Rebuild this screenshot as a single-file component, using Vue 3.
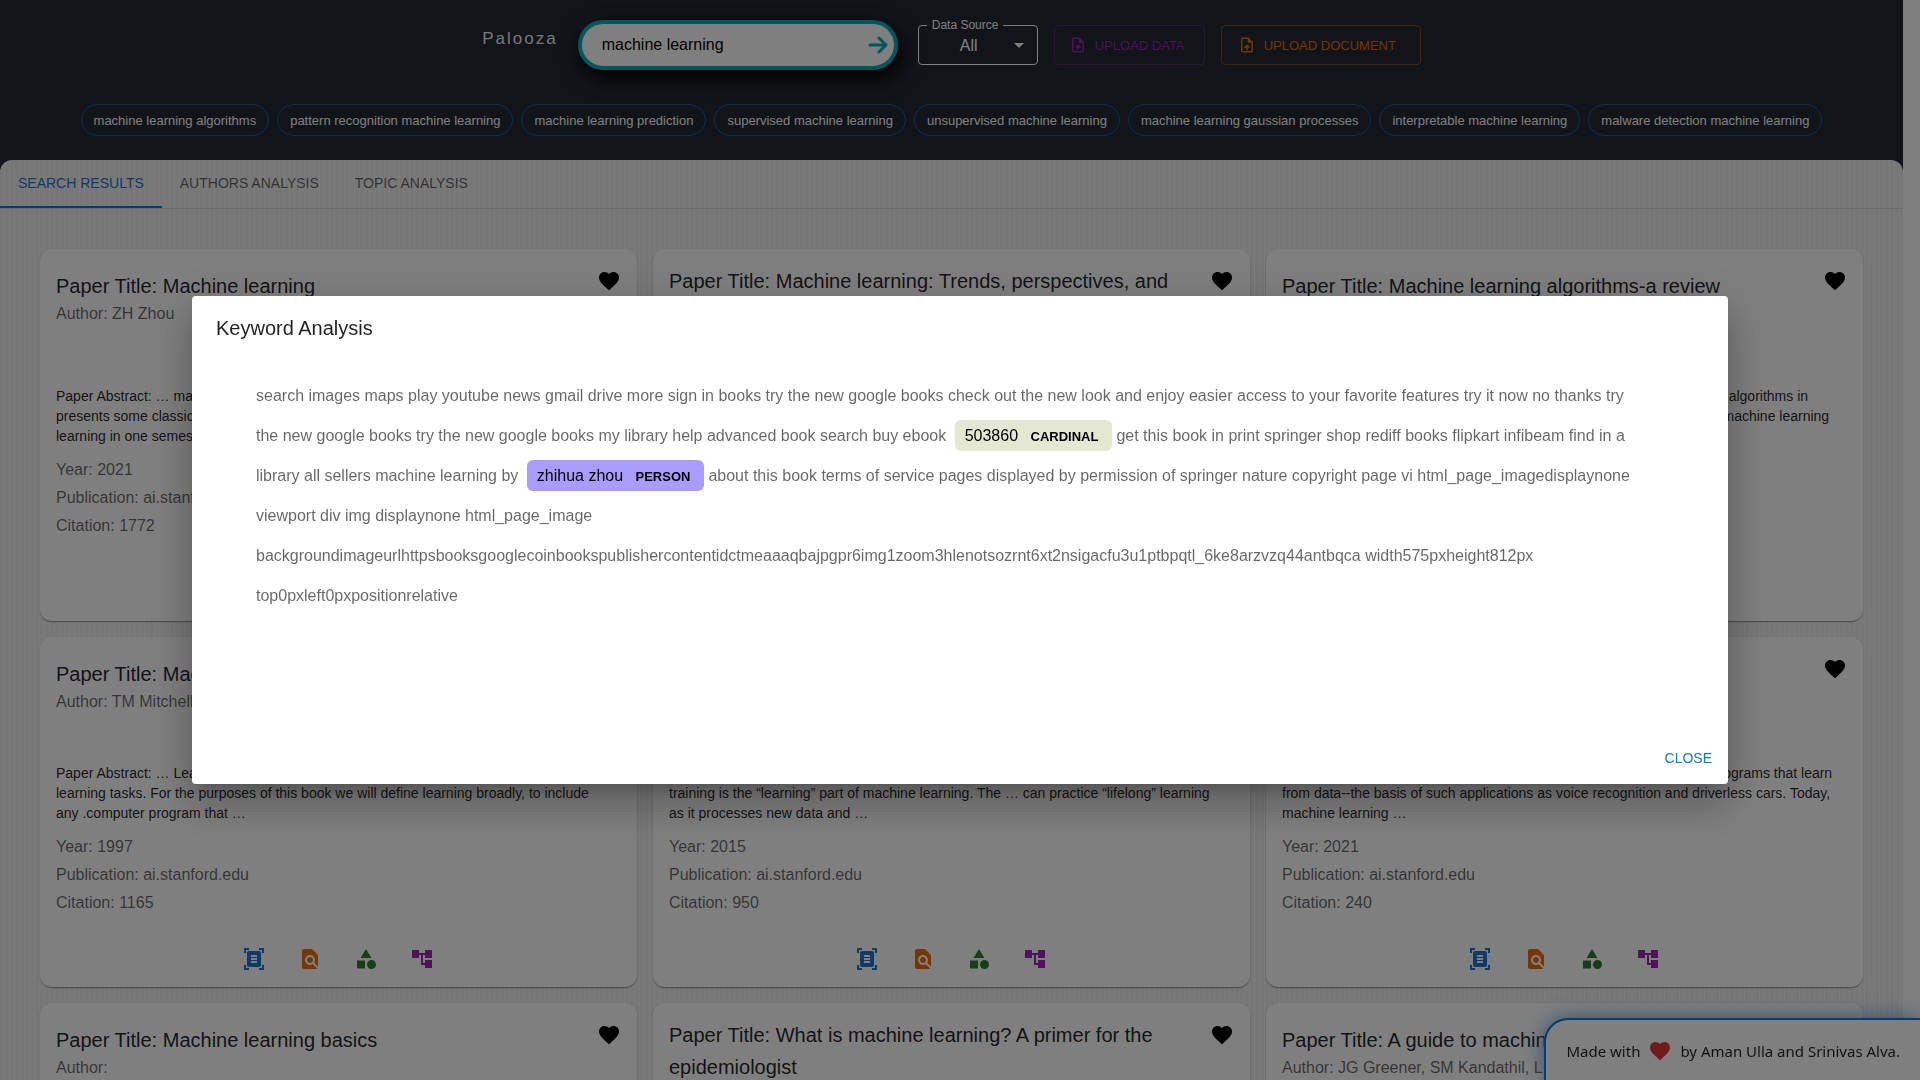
<script setup>
import { ref } from 'vue'

const query = ref('machine learning')
const source = ref('All')

const suggestions = [
  'machine learning algorithms',
  'pattern recognition machine learning',
  'machine learning prediction',
  'supervised machine learning',
  'unsupervised machine learning',
  'machine learning gaussian processes',
  'interpretable machine learning',
  'malware detection machine learning',
]

const tabs = ['Search Results', 'Authors Analysis', 'Topic Analysis']

const papers = [
  {
    title: 'Machine learning',
    author: 'ZH Zhou',
    abstract: [
      '… machine learning methods and algorithms. The book',
      'presents some classic and popular topics, and teaches machine',
      'learning in one semester …',
    ],
    year: 2021,
    citation: 1772,
  },
  {
    title: 'Machine learning: Trends, perspectives, and prospects',
    author: 'MI Jordan, TM Mitchell',
    abstract: [
      '… Machine learning addresses the question of how to',
      'build computers that improve automatically through',
      'experience …',
    ],
    year: 2015,
    citation: 6042,
  },
  {
    title: 'Machine learning algorithms-a review',
    author: 'B Mahesh',
    abstract: [
      '… In this paper we review and compare the well-known algorithms in',
      'use today for many learning tasks, and give the general background of machine learning',
      'methods …',
    ],
    year: 2020,
    citation: 1120,
  },
  {
    title: 'Machine learning',
    author: 'TM Mitchell',
    abstract: [
      '… Learning covers a wide range of',
      'learning tasks. For the purposes of this book we will define learning broadly, to include',
      'any .computer program that …',
    ],
    year: 1997,
    citation: 1165,
  },
  {
    title: 'What is machine learning?',
    author: 'I El Naqa, MJ Murphy',
    abstract: [
      '… The process of',
      'training is the “learning” part of machine learning. The … can practice “lifelong” learning',
      'as it processes new data and …',
    ],
    year: 2015,
    citation: 950,
  },
  {
    title: 'Machine learning',
    author: 'E Alpaydin',
    abstract: [
      '… a clear concise overview of machine learning--the programs that learn',
      'from data--the basis of such applications as voice recognition and driverless cars. Today,',
      'machine learning …',
    ],
    year: 2021,
    citation: 240,
  },
  {
    title: 'Machine learning basics',
    author: '',
    abstract: ['… Machine learning is a', 'field of study …', 'and practice …'],
    year: 2016,
    citation: 310,
  },
  {
    title: 'What is machine learning? A primer for the epidemiologist',
    author: 'Q Bi, KE Goodman',
    abstract: ['… Machine learning is a', 'branch of computer', 'science …'],
    year: 2019,
    citation: 420,
  },
  {
    title: 'A guide to machine learning for biologists',
    author: 'JG Greener, SM Kandathil, L Moffat',
    abstract: ['… The expanding scale', 'of biological data …', 'and models …'],
    year: 2022,
    citation: 510,
  },
]

const heart =
  'm12 21.35-1.45-1.32C5.4 15.36 2 12.28 2 8.5 2 5.42 4.42 3 7.5 3c1.74 0 3.41.81 4.5 2.09C13.09 3.81 14.76 3 16.5 3 19.58 3 22 5.42 22 8.5c0 3.78-3.4 6.86-8.55 11.54L12 21.35z'
const upload =
  'M14 2H6c-1.1 0-1.99.9-1.99 2L4 20c0 1.1.89 2 1.99 2H18c1.1 0 2-.9 2-2V8l-6-6zm4 18H6V4h7v5h5v11zM8 15.01l1.41 1.41L11 14.84V19h2v-4.16l1.59 1.59L16 15.01 12.01 11 8 15.01z'

const actions = [
  {
    name: 'Summary',
    tone: 'blue',
    path: 'M7 3H4v3H2V1h5v2zm15 3V1h-5v2h3v3h2zM7 21H4v-3H2v5h5v-2zm13-3v3h-3v2h5v-5h-2zM19 18c0 1.1-.9 2-2 2H7c-1.1 0-2-.9-2-2V6c0-1.1.9-2 2-2h10c1.1 0 2 .9 2 2v12zM15 8H9v2h6V8zm0 3H9v2h6v-2zm0 3H9v2h6v-2z',
  },
  {
    name: 'Keyword analysis',
    tone: 'orange',
    path: 'M20 19.59V8l-6-6H6c-1.1 0-1.99.9-1.99 2L4 20c0 1.1.89 2 1.99 2H18c.45 0 .85-.15 1.19-.4l-4.43-4.43c-.8.52-1.74.83-2.76.83-2.76 0-5-2.24-5-5s2.24-5 5-5 5 2.24 5 5c0 1.02-.31 1.96-.83 2.75L20 19.59zM9 13c0 1.66 1.34 3 3 3s3-1.34 3-3-1.34-3-3-3-3 1.34-3 3z',
  },
  {
    name: 'Categories',
    tone: 'green',
    path: 'm12 2-5.5 9h11zM17.5 13a4.5 4.5 0 1 0 0 9 4.5 4.5 0 0 0 0-9zM3 13.5h8v8H3z',
  },
  {
    name: 'Topic tree',
    tone: 'purple',
    path: 'M22 11V3h-7v3H9V3H2v8h7V8h2v10h4v3h7v-8h-7v3h-2V8h2v3z',
  },
]
</script>

<template>
  <div class="page">
    <header class="header">
      <div class="toolbar">
        <span class="brand">Palooza</span>
        <form class="search" role="search" @submit.prevent>
          <input v-model="query" class="search-input" type="text" aria-label="Search papers" />
          <button class="search-go" type="submit" aria-label="Search">
            <svg viewBox="0 0 20 20" width="20" height="20">
              <path d="M2 10h15M11 3l7 7-7 7" />
            </svg>
          </button>
        </form>
        <div class="source">
          <label class="source-label" for="source">Data Source</label>
          <select id="source" v-model="source" class="source-select">
            <option>All</option>
          </select>
          <svg class="source-arrow" viewBox="0 0 24 24" width="24" height="24"><path d="m7 10 5 5 5-5z" /></svg>
        </div>
        <button class="upload purple" type="button">
          <svg viewBox="0 0 24 24" width="18" height="18"><path :d="upload" /></svg>
          UPLOAD DATA
        </button>
        <button class="upload orange wide" type="button">
          <svg viewBox="0 0 24 24" width="18" height="18"><path :d="upload" /></svg>
          UPLOAD DOCUMENT
        </button>
      </div>
      <div class="chips">
        <button v-for="s in suggestions" :key="s" class="chip" type="button">{{ s }}</button>
      </div>
    </header>

    <main class="panel">
      <nav class="tabs">
        <button v-for="(t, i) in tabs" :key="t" class="tab" :class="{ active: i === 0 }" type="button">{{ t }}</button>
      </nav>
      <div class="grid">
        <article v-for="(p, i) in papers" :key="i" class="card">
          <div class="card-head">
            <div class="card-heading">
              <h2 class="card-title">Paper Title: {{ p.title }}</h2>
              <p class="card-author">Author: {{ p.author }}</p>
            </div>
            <button class="icon-button like" type="button" aria-label="Like">
              <svg viewBox="0 0 24 24" width="24" height="24"><path :d="heart" /></svg>
            </button>
          </div>
          <div class="card-body">
            <p class="abstract">Paper Abstract: {{ p.abstract.join('\n') }}</p>
            <p class="meta">Year: {{ p.year }}</p>
            <p class="meta">Publication: ai.stanford.edu</p>
            <p class="meta">Citation: {{ p.citation }}</p>
          </div>
          <div class="card-actions">
            <button
              v-for="a in actions"
              :key="a.name"
              class="icon-button"
              :class="a.tone"
              type="button"
              :aria-label="a.name"
            >
              <svg viewBox="0 0 24 24" width="24" height="24"><path :d="a.path" /></svg>
            </button>
          </div>
        </article>
      </div>
    </main>

    <footer class="credit">
      Made with
      <svg viewBox="0 0 24 24" width="24" height="24"><path :d="heart" /></svg>
      by Aman Ulla and Srinivas Alva.
    </footer>

    <div class="backdrop">
      <section class="dialog" role="dialog" aria-modal="true" aria-labelledby="dialog-title">
        <h2 id="dialog-title" class="dialog-title">Keyword Analysis</h2>
        <div class="dialog-content">
          <p class="entities">
            search images maps play youtube news gmail drive more sign in books try the new google books check out the
            new look and enjoy easier access to your favorite features try it now no thanks try the new google books try
            the new google books my library help advanced book search buy ebook
            <mark class="entity cardinal">503860 <span class="entity-label">CARDINAL</span></mark
            >get this book in print springer shop rediff books flipkart infibeam find in a library all sellers machine
            learning by <mark class="entity person">zhihua zhou <span class="entity-label">PERSON</span></mark
            >about this book terms of service pages displayed by permission of springer nature copyright page vi
            html_page_imagedisplaynone viewport div img displaynone html_page_image
            backgroundimageurlhttpsbooksgooglecoinbookspublishercontentidctmeaaaqbajpgpr6img1zoom3hlenotsozrnt6xt2nsigacfu3u1ptbpqtl_6ke8arzvzq44antbqca
            width575pxheight812px top0pxleft0pxpositionrelative
          </p>
        </div>
        <div class="dialog-actions">
          <button class="close" type="button">CLOSE</button>
        </div>
      </section>
    </div>
  </div>
</template>

<style>
html,
body {
  height: 100%;
  overflow: hidden;
}
body {
  margin: 0;
  padding-right: 17px;
  box-sizing: border-box;
  background: #fff;
}
</style>

<style scoped>
.page,
.page * {
  box-sizing: border-box;
}
.page {
  background: #222831;
  font-family: "Liberation Sans", Arial, sans-serif;
  font-size: 16px;
  color: rgba(0, 0, 0, 0.87);
}
h2,
p {
  margin: 0;
  font-weight: 400;
}
button,
input,
select {
  font-family: inherit;
  margin: 0;
}
button {
  cursor: pointer;
}
svg {
  display: block;
  fill: currentColor;
  flex: none;
}

.blue {
  color: #1976d2;
}
.orange {
  color: #ed6c02;
}
.green {
  color: #2e7d32;
}
.purple {
  color: #9c27b0;
}

.header {
  padding: 20px 0 24px;
}
.toolbar {
  display: flex;
  justify-content: center;
  align-items: center;
  gap: 16px;
}
.brand {
  color: #eee;
  font-size: 17px;
  letter-spacing: 2px;
  line-height: 20px;
  padding-bottom: 12px;
}
.search {
  display: flex;
  align-items: center;
  width: 320px;
  height: 50px;
  margin: 0 4px;
  padding: 0 4px 0 20px;
  background: #fff;
  border: 4px solid #00adb5;
  border-radius: 25px;
  box-shadow: 4px 8px 20px #000;
}
.search-input {
  flex: 1;
  min-width: 0;
  height: 40px;
  padding: 0;
  border: 0;
  outline: 0;
  background: transparent;
  color: #000;
  font-size: 16px;
}
.search-go {
  padding: 2px;
  border: 0;
  background: transparent;
  color: #00adb5;
}
.search-go svg {
  fill: none;
  stroke: currentColor;
  stroke-width: 3;
  stroke-linecap: round;
  stroke-linejoin: round;
}
.source {
  position: relative;
  width: 120px;
}
.source-label {
  position: absolute;
  left: 9px;
  top: -8px;
  padding: 0 5px;
  background: #222831;
  color: #fff;
  font-size: 12px;
  line-height: 16px;
}
.source-select {
  display: block;
  width: 100%;
  height: 40px;
  padding: 0 32px 0 14px;
  appearance: none;
  background: transparent;
  border: 1px solid #fff;
  border-radius: 4px;
  color: #fff;
  font-size: 16px;
  text-align: center;
  text-align-last: center;
}
.source-arrow {
  position: absolute;
  right: 7px;
  top: 8px;
  color: #fff;
  pointer-events: none;
}
.upload {
  display: flex;
  align-items: center;
  gap: 8px;
  min-width: 151px;
  height: 40px;
  padding: 0 14px;
  background: transparent;
  border: 1px solid rgba(156, 39, 176, 0.5);
  border-radius: 4px;
  font-size: 13px;
  white-space: nowrap;
}
.upload.wide {
  min-width: 200px;
  padding: 0 16px;
  border-color: rgba(237, 108, 2, 0.5);
}
.chips {
  display: flex;
  justify-content: center;
  gap: 8px;
  margin-top: 34px;
}
.chip {
  height: 32px;
  padding: 0 12px;
  background: transparent;
  border: 1px solid rgba(25, 118, 210, 0.7);
  border-radius: 16px;
  color: #fff;
  font-size: 13px;
  white-space: nowrap;
}

.panel {
  border-radius: 12px 12px 0 0;
  background: repeating-linear-gradient(90deg, #eee 0 4px, #f8f8f8 4px 5px);
}
.tabs {
  display: flex;
  border-bottom: 1px solid rgba(0, 0, 0, 0.12);
}
.tab {
  height: 48px;
  padding: 0 18px;
  background: transparent;
  border: 0;
  border-bottom: 2px solid transparent;
  color: rgba(0, 0, 0, 0.6);
  font-size: 14px;
  text-transform: uppercase;
}
.tab.active {
  color: #1976d2;
  border-color: #1976d2;
}
.grid {
  display: grid;
  grid-template-columns: repeat(3, minmax(0, 1fr));
  gap: 16px;
  padding: 40px;
}
.card {
  display: flex;
  flex-direction: column;
  justify-content: space-between;
  background: #fff;
  border-radius: 12px;
  box-shadow: 0 2px 1px -1px rgba(0, 0, 0, 0.2), 0 1px 1px rgba(0, 0, 0, 0.14), 0 1px 3px rgba(0, 0, 0, 0.12);
}
.card-head {
  display: flex;
  align-items: center;
  min-height: 98px;
  padding: 16px;
}
.card-heading {
  flex: 1;
  min-width: 0;
}
.card-title {
  font-size: 20px;
  line-height: 32px;
}
.card-author {
  color: rgba(0, 0, 0, 0.6);
  line-height: 24px;
}
.icon-button {
  padding: 8px;
  border: 0;
  background: transparent;
}
.like {
  align-self: flex-start;
  margin: -4px -8px 0 0;
  color: #000;
}
.card-body {
  padding: 28px 16px 14px;
}
.abstract {
  margin-bottom: 10px;
  font-size: 14px;
  line-height: 20px;
  white-space: pre-line;
}
.meta {
  color: rgba(0, 0, 0, 0.6);
  line-height: 28px;
}
.card-actions {
  display: flex;
  justify-content: center;
  gap: 16px;
  padding: 8px 10px 8px 8px;
}

.credit {
  position: fixed;
  right: 0;
  bottom: 0;
  display: flex;
  align-items: center;
  gap: 8px;
  height: 62px;
  padding: 2px 20px 0;
  background: #fff;
  border: 2px solid #1976d2;
  border-width: 2px 0 0 2px;
  border-radius: 24px 0 0 0;
  box-shadow: 0 0 20px rgba(25, 118, 210, 0.7);
  font-family: "Noto Sans", "Open Sans", sans-serif;
  font-size: 15px;
  white-space: nowrap;
}
.credit svg {
  color: #e53935;
}

.backdrop {
  position: fixed;
  inset: 0;
  display: flex;
  align-items: center;
  justify-content: center;
  padding: 32px;
  background: rgba(0, 0, 0, 0.5);
}
.dialog {
  width: 100%;
  max-width: 1536px;
  background: #fff;
  border-radius: 4px;
  box-shadow: 0 11px 15px -7px rgba(0, 0, 0, 0.2), 0 24px 38px 3px rgba(0, 0, 0, 0.14),
    0 9px 46px 8px rgba(0, 0, 0, 0.12);
}
.dialog-title {
  padding: 16px 24px;
  font-size: 20px;
  line-height: 32px;
}
.dialog-content {
  min-height: 372px;
  padding: 16px 86px 16px 64px;
}
.entities {
  color: rgba(0, 0, 0, 0.6);
  line-height: 40px;
}
.entity {
  margin: 0 4px;
  padding: 7px 10px;
  border-radius: 6px;
  color: #000;
  white-space: nowrap;
}
.cardinal {
  background: #e4e7d2;
}
.person {
  background: #aa9cfc;
}
.entity-label {
  margin: 0 4px 0 8px;
  font-size: 13px;
  font-weight: 700;
  line-height: 16px;
}
.dialog-actions {
  display: flex;
  justify-content: flex-end;
  padding: 8px;
}
.close {
  height: 36px;
  padding: 0 8px;
  background: transparent;
  border: 0;
  color: #1976d2;
  font-size: 14px;
}
</style>
